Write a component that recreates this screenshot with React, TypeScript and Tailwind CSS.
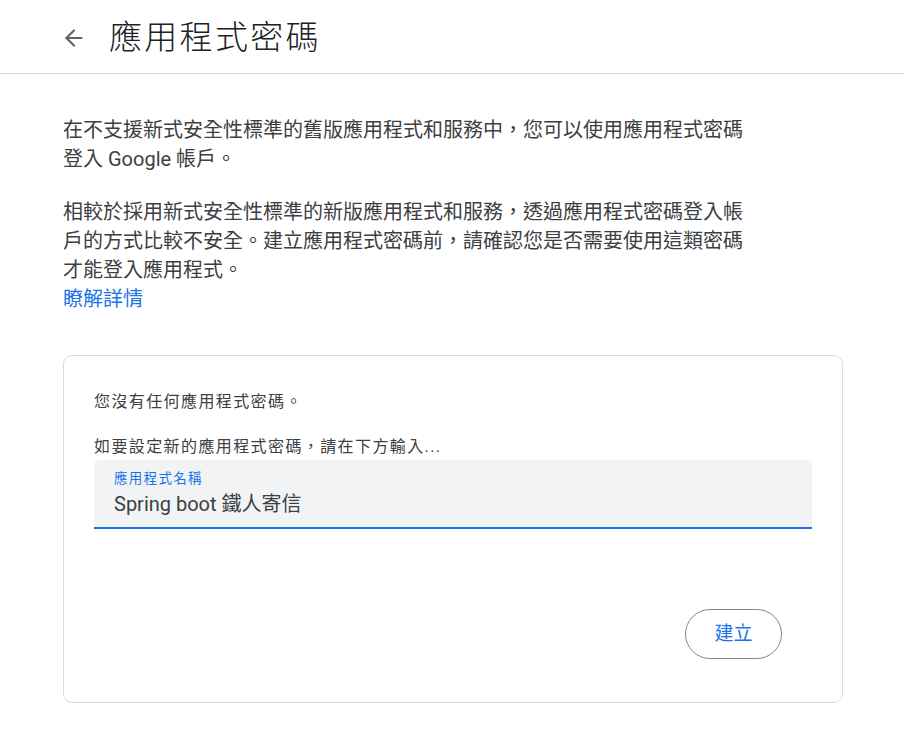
import { ArrowLeft } from 'lucide-react';

const font = {
  fontFamily: 'Roboto, "Noto Sans CJK TC", "Noto Sans", sans-serif',
};

export default function App() {
  return (
    <div className="min-h-screen w-[905px] bg-white [text-spacing-trim:space-all]" style={font}>
      {/* Header */}
      <div className="flex h-[74px] items-center border-b border-[#dadce0] pl-[61px] pt-[3px]">
        <ArrowLeft size={26} strokeWidth={2} className="text-[#5f6368]" />
        <h1 className="ml-[22px] text-[33px] font-light tracking-[2.3px] text-[#202124]">應用程式密碼</h1>
      </div>

      <div className="pl-[63px] pr-[62px] pt-[42px] pb-10">
        <p className="text-[20px] leading-[29px] text-[#3c4043]">
          在不支援新式安全性標準的舊版應用程式和服務中，您可以使用應用程式密碼
          <br />
          登入 Google 帳戶。
        </p>
        <p className="mt-[24px] text-[20px] leading-[29px] text-[#3c4043]">
          相較於採用新式安全性標準的新版應用程式和服務，透過應用程式密碼登入帳
          <br />
          戶的方式比較不安全。建立應用程式密碼前，請確認您是否需要使用這類密碼
          <br />
          才能登入應用程式。
        </p>
        <a href="#" className="block text-[20px] leading-[29px] text-[#1a73e8]">瞭解詳情</a>

        {/* Card */}
        <div className="mt-[41px] w-[780px] rounded-[9px] border border-[#dadce0] pt-[34px] pl-[30px] pr-[30px] pb-[43px]">
          <p className="text-[16px] leading-[24px] tracking-[1.4px] text-[#3c4043]">您沒有任何應用程式密碼。</p>
          <p className="mt-[21px] text-[16px] leading-[24px] tracking-[1.4px] text-[#3c4043]">如要設定新的應用程式密碼，請在下方輸入...</p>
          <div className="mt-[1px] h-[69px] w-[718px] rounded-t-[5px] border-b-2 border-[#1a73e8] bg-[#f1f3f4] px-5 pt-[9px]">
            <div className="text-[13.5px] leading-[18px] tracking-[1.3px] text-[#1a73e8]">應用程式名稱</div>
            <div className="mt-[3px] text-[20px] leading-[28px] text-[#3c4043]">Spring boot 鐵人寄信</div>
          </div>
          <div className="mt-[80px] flex justify-end pr-[30px]">
            <button className="h-[50px] w-[97px] rounded-full border border-[#80868b] text-[19px] text-[#1a73e8]">
              建立
            </button>
          </div>
        </div>
      </div>
    </div>
  );
}
